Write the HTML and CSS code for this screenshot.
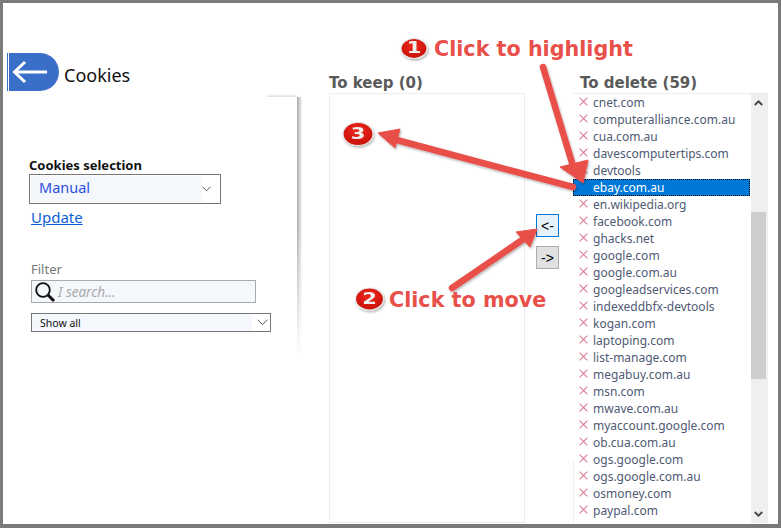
FILE: index.html
```html
<!DOCTYPE html>
<html lang="en">
<head>
<meta charset="utf-8">
<title>Cookies</title>
<link rel="stylesheet" href="styles.css">
</head>
<body>
<div class="window">
  <section class="left">
    <header class="title-row">
      <button class="back" aria-label="Back">
        <svg width="40" height="38" viewBox="0 0 40 38"><path d="M37 19H5M15 9 4.5 19 15 29" fill="none" stroke="#fff" stroke-width="3"/></svg>
      </button>
      <h1 class="page-title">Cookies</h1>
    </header>
    <div class="card">
      <div class="sel-label">Cookies selection</div>
      <div class="combo">
        <span class="combo-value">Manual</span>
        <svg class="chev" width="9" height="6" viewBox="0 0 9 6"><path d="M.5.8 4.5 4.8 8.5.8" fill="none" stroke="#555" stroke-width="1"/></svg>
      </div>
      <a class="update" href="#">Update</a>
      <div class="filter-label">Filter</div>
      <div class="search">
        <svg width="22" height="22" viewBox="0 0 22 22"><circle cx="9" cy="9" r="6.8" fill="none" stroke="#111" stroke-width="1.8"/><path d="M14 14 20 20" stroke="#111" stroke-width="3"/></svg>
        <span class="placeholder">I search...</span>
      </div>
      <div class="small-combo">
        <span class="small-value">Show all</span>
        <svg class="chev" width="11" height="7" viewBox="0 0 11 7"><path d="M.7.8 5.5 5.6 10.3.8" fill="none" stroke="#555" stroke-width="1"/></svg>
      </div>
    </div>
  </section>

  <section class="keep">
    <h2 class="col-title">To keep (0)</h2>
    <div class="keep-box"></div>
  </section>

  <div class="movers">
    <button class="mover active">&lt;-</button>
    <button class="mover">-&gt;</button>
  </div>

  <section class="del">
    <h2 class="col-title del-title">To delete (59)</h2>
    <div class="list-wrap">
      <ul class="list">
        <li class="row"><span class="x"></span>cnet.com</li>
        <li class="row"><span class="x"></span>computeralliance.com.au</li>
        <li class="row"><span class="x"></span>cua.com.au</li>
        <li class="row"><span class="x"></span>davescomputertips.com</li>
        <li class="row"><span class="x"></span>devtools</li>
        <li class="row selected"><span class="x"></span>ebay.com.au</li>
        <li class="row"><span class="x"></span>en.wikipedia.org</li>
        <li class="row"><span class="x"></span>facebook.com</li>
        <li class="row"><span class="x"></span>ghacks.net</li>
        <li class="row"><span class="x"></span>google.com</li>
        <li class="row"><span class="x"></span>google.com.au</li>
        <li class="row"><span class="x"></span>googleadservices.com</li>
        <li class="row"><span class="x"></span>indexeddbfx-devtools</li>
        <li class="row"><span class="x"></span>kogan.com</li>
        <li class="row"><span class="x"></span>laptoping.com</li>
        <li class="row"><span class="x"></span>list-manage.com</li>
        <li class="row"><span class="x"></span>megabuy.com.au</li>
        <li class="row"><span class="x"></span>msn.com</li>
        <li class="row"><span class="x"></span>mwave.com.au</li>
        <li class="row"><span class="x"></span>myaccount.google.com</li>
        <li class="row"><span class="x"></span>ob.cua.com.au</li>
        <li class="row"><span class="x"></span>ogs.google.com</li>
        <li class="row"><span class="x"></span>ogs.google.com.au</li>
        <li class="row"><span class="x"></span>osmoney.com</li>
        <li class="row"><span class="x"></span>paypal.com</li>
      </ul>
      <div class="scrollbar">
        <svg class="sb-arrow" width="9" height="6" viewBox="0 0 9 6"><path d="M.8 5 4.5 1.3 8.2 5" fill="none" stroke="#444" stroke-width="1.8"/></svg>
        <div class="thumb"></div>
        <svg class="sb-arrow sb-down" width="9" height="6" viewBox="0 0 9 6"><path d="M.8 1 4.5 4.7 8.2 1" fill="none" stroke="#444" stroke-width="1.8"/></svg>
      </div>
    </div>
  </section>

  <svg class="arrows" width="781" height="528" viewBox="0 0 781 528">
    <defs>
      <filter id="sh" x="-20%" y="-20%" width="140%" height="140%"><feDropShadow dx="1" dy="1.5" stdDeviation="1.2" flood-color="#000" flood-opacity=".3"/></filter>
      <radialGradient id="red" cx=".5" cy=".35" r=".7"><stop offset="0" stop-color="#f02a1c"/><stop offset="1" stop-color="#c40d08"/></radialGradient>
    </defs>
    <g fill="#e9504a" stroke="#e9504a" filter="url(#sh)">
      <path d="M543 67 573 166" stroke-width="6.5" stroke-linecap="round"/>
      <path d="M560 167 588 160 583 183Z" stroke-width="1"/>
      <path d="M573 187 393 139" stroke-width="6.5" stroke-linecap="round"/>
      <path d="M378 133 400 129 395 148Z" stroke-width="1"/>
      <path d="M452 288 525 238" stroke-width="6.5" stroke-linecap="round"/>
      <path d="M537 229 516 232 530 247Z" stroke-width="1"/>
    </g>
    <g filter="url(#sh)">
      <ellipse cx="414" cy="48.500" rx="13" ry="10" fill="url(#red)" stroke="#e8e8e8" stroke-width="1.2"/>
      <ellipse cx="358" cy="134" rx="15" ry="11.500" fill="url(#red)" stroke="#e8e8e8" stroke-width="1.2"/>
      <ellipse cx="369.500" cy="299" rx="14" ry="11" fill="url(#red)" stroke="#e8e8e8" stroke-width="1.2"/>
    </g>
  </svg>
  <span class="badge b1">1</span>
  <span class="badge b3">3</span>
  <span class="badge b2">2</span>
  <span class="note n1">Click to highlight</span>
  <span class="note n2">Click to move</span>
</div>
</body>
</html>
```
FILE: styles.css
```css
* { box-sizing: border-box; }
html, body { margin: 0; padding: 0; background: #fff; }
.window {
  position: relative;
  width: 781px;
  height: 528px;
  display: flex;
  overflow: hidden;
  background: #fff;
  border: solid #7a7a7a;
  border-width: 3px 3px 4px 3px;
  font-family: "Noto Sans", "Open Sans", sans-serif;
}
.left { width: 326px; flex: none; padding: 50px 0 0 4px; }
.title-row { display: flex; align-items: center; gap: 5px; height: 38px; }
.back {
  width: 52px;
  height: 38px;
  padding: 0 0 0 2px;
  border: 0;
  border-left: 1px solid #3a6fc9;
  background: #3a6fc9;
  background-clip: padding-box;
  border-radius: 0 19px 19px 0;
  box-shadow: inset 1px 0 0 #fff;
  display: flex;
  align-items: center;
}
.page-title { margin: 0; font-size: 18px; font-weight: 400; color: #111; line-height: 38px; position: relative; top: 3px; }
.card {
  position: relative;
  width: 290px;
  height: 260px;
  margin-top: 6px;
  padding: 59px 0 0 22px;
  background: #fff;
  border-radius: 0 4px 0 0;
}
.card::after {
  content: "";
  position: absolute;
  top: 0;
  right: -5px;
  width: 5px;
  height: 100%;
  background: linear-gradient(to right, #aaa, rgba(210,210,210,.2));
  -webkit-mask-image: linear-gradient(to bottom, #000 50%, transparent);
  mask-image: linear-gradient(to bottom, #000 50%, transparent);
}
.card::before {
  content: "";
  position: absolute;
  top: -3px;
  right: 0;
  width: 30px;
  height: 3px;
  background: linear-gradient(to bottom, rgba(220,220,220,0), #ddd);
}
.sel-label { font-size: 13px; font-weight: 700; color: #111; line-height: 18px; }
.combo {
  width: 192px;
  height: 30px;
  display: flex;
  align-items: center;
  justify-content: space-between;
  border: 1px solid #777;
  padding: 1px 9px 1px 1px;
}
.combo-value {
  width: 171px;
  height: 26px;
  padding-left: 8px;
  background: #f4f7fc;
  color: #2b4fe0;
  font-size: 14.500px;
  line-height: 23px;
}
.update { display: block; margin: 2px 0 0 2px; font-size: 15px; line-height: 22px; color: #0a5fd8; }
.filter-label { margin: 32px 0 0 2px; font-size: 13px; line-height: 18px; color: #777; }
.search {
  width: 225px;
  height: 23px;
  margin: 2px 0 0 2px;
  display: flex;
  align-items: center;
  gap: 2px;
  padding-left: 2px;
  background: #f4f7fc;
  border: 1px solid #aaa;
}
.placeholder { font-size: 13.500px; font-style: italic; color: #aaa; }
.small-combo {
  width: 240px;
  height: 19px;
  margin: 10px 0 0 2px;
  display: flex;
  align-items: center;
  justify-content: space-between;
  border: 1px solid #777;
  padding: 0 2px 0 0;
}
.small-value {
  width: 220px;
  height: 17px;
  padding-left: 8px;
  background: #f4f7fc;
  font-size: 10.500px;
  line-height: 18px;
  color: #111;
}
.col-title {
  margin: 0;
  height: 20px;
  font-family: "DejaVu Sans", Verdana, sans-serif;
  font-size: 15px;
  font-weight: 700;
  line-height: 20px;
  color: #5a5a5a;
}
.keep { width: 196px; flex: none; padding-top: 70px; }
.keep-box { height: 430px; border: 1px solid #eee; }
.movers { width: 48px; flex: none; padding: 211px 0 0 11px; display: flex; flex-direction: column; gap: 9px; }
.mover {
  width: 23px;
  height: 23px;
  padding: 0;
  background: #e1e1e1;
  border: 1px solid #adadad;
  font-family: "Liberation Sans", sans-serif;
  font-size: 14px;
  font-weight: 400;
  color: #000;
}
.mover.active { background: #e5f1fb; border-color: #0078d7; }
.del { flex: none; width: 195px; padding-top: 70px; }
.del-title { padding-left: 7px; }
.list-wrap { position: relative; height: 430px; display: flex; overflow: hidden; border-top: 1px solid #eee; }
.list-wrap::after {
  content: "";
  position: absolute;
  left: 0;
  bottom: 0;
  width: 1px;
  height: 62px;
  background: #eee;
}
.list { list-style: none; margin: 0; padding: 0; width: 178px; flex: none; overflow: hidden; }
.row {
  display: flex;
  align-items: center;
  height: 17px;
  padding-left: 6px;
  font-size: 12px;
  color: #4f5a73;
  white-space: nowrap;
}
.x {
  position: relative;
  width: 9px;
  height: 9px;
  margin: -3px 5px 0 0;
  flex: none;
}
.x::before, .x::after {
  content: "";
  position: absolute;
  left: -1px;
  top: 4px;
  width: 11px;
  height: 1px;
  background: #d9788c;
  transform: rotate(45deg);
}
.x::after { transform: rotate(-45deg); }
.row.selected {
  margin-right: 1px;
  background: #0078d7;
  color: #fff;
  outline: 1px dotted #000;
  outline-offset: -1px;
}
.row.selected .x { visibility: hidden; }
.scrollbar { position: relative; width: 17px; height: 100%; background: #efefef; flex: none; }
.sb-arrow { position: absolute; left: 3px; top: 6px; }
.sb-down { top: auto; bottom: 6px; }
.thumb { position: absolute; left: 0; top: 118px; width: 15px; height: 167px; background: #cdcdcd; }
.arrows { position: absolute; left: -3px; top: -3px; pointer-events: none; }
.badge, .note { position: absolute; font-family: "DejaVu Sans", Verdana, sans-serif; font-weight: 700; }
.badge { color: #f0f0f0; text-align: center; font-size: 15px; transform: scaleX(1.4); }
.b1 { left: 398px; top: 35px; width: 26px; line-height: 21px; }
.b3 { left: 340px; top: 120px; width: 30px; line-height: 23px; }
.b2 { left: 352px; top: 285px; width: 29px; line-height: 22px; }
.note { color: #e9504a; white-space: nowrap; font-size: 20.700px; line-height: 24px; }
.n1 { left: 431px; top: 34px; }
.n2 { left: 386px; top: 285px; }
```
